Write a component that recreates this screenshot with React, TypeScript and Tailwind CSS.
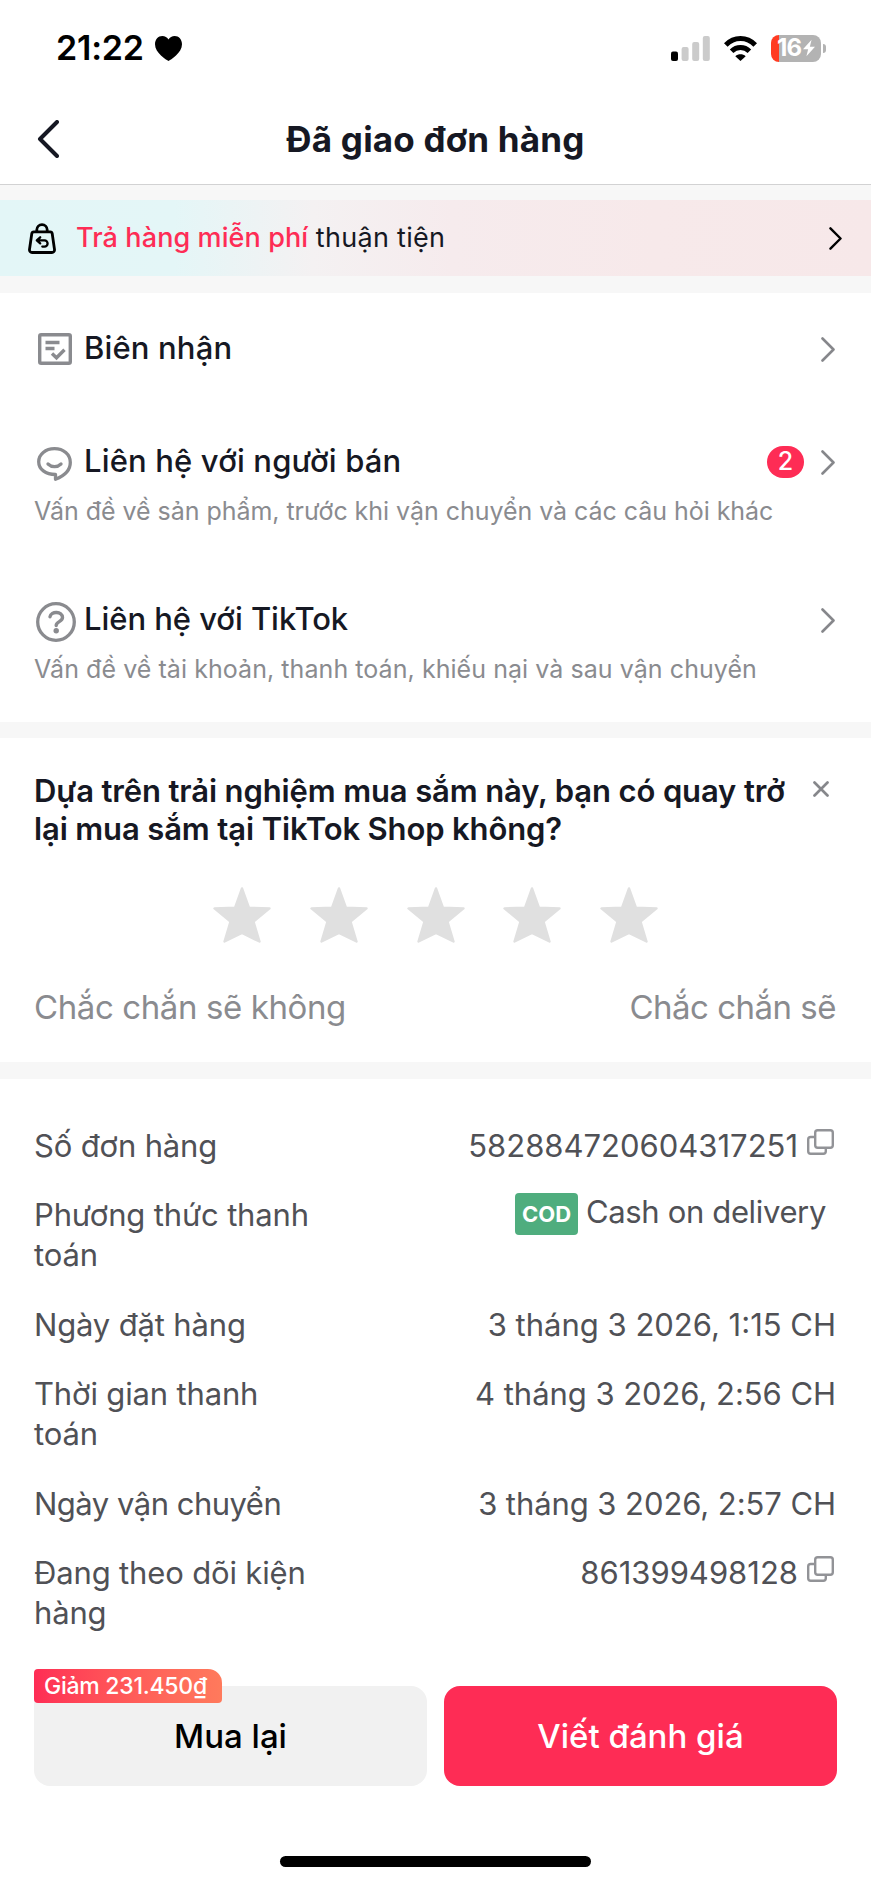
import React, { useState } from "react";

interface DetailRowProps {
  label: React.ReactNode;
  children: React.ReactNode;
}

interface MenuRowProps {
  icon: React.ReactNode;
  title: React.ReactNode;
  badge?: number;
  description?: React.ReactNode;
}

const ChevronIcon = ({ className }: { className: string }) => (
  <svg className={className} viewBox="0 0 14 25" fill="none" stroke="currentColor" strokeLinecap="round" strokeLinejoin="round">
    <path d="M1.5 1.5 12.5 12.5 1.5 23.5" strokeWidth="2.6" />
  </svg>
);

const CopyIcon = () => (
  <svg className="ml-[9px] mr-0.5 h-[26px] w-[27px] -translate-y-1" viewBox="0 0 27 26" fill="none" stroke="#929397" strokeWidth="2.4">
    <rect x="8.2" y="1.2" width="17.6" height="17.6" rx="2.5" />
    <path d="M8 8H3.700A2.500 2.500 0 0 0 1.200 10.500v11.800A2.500 2.500 0 0 0 3.700 24.800h12.600a2.500 2.500 0 0 0 2.500-2.500V19" />
  </svg>
);

const StarIcon = ({ filled }: { filled: boolean }) => (
  <svg className={filled ? "h-[56px] w-[58px] text-[#fe2c55]" : "h-[56px] w-[58px] text-[#e0e0e0]"} viewBox="0 0 58 56" fill="currentColor">
    <path
      d="M29 1.5 36 20.8 56.5 21.4 40.500 34.500 46.500 54.500 29 46 11.500 54.500 17.500 34.500 1.500 21.400 22 20.800Z"
      stroke="currentColor"
      strokeWidth="2.4"
      strokeLinejoin="round"
    />
  </svg>
);

function StatusBar() {
  return (
    <div className="flex h-24 items-center pl-[56px] pr-[45px] text-black">
      <span className="text-[34px] font-semibold leading-none tracking-[-0.2px]">21:22</span>
      <svg className="ml-[11px] h-[25px] w-[27px]" viewBox="0 0 27 25" fill="currentColor">
        <path d="M13.500 25C11.500 23.800 0 17 0 8.200 0 3.500 3.200 0 7.300 0c2.700 0 4.900 1.300 6.200 3.400C14.800 1.300 17 0 19.700 0 23.800 0 27 3.500 27 8.200 27 17 15.500 23.800 13.500 25Z" />
      </svg>
      <div className="ml-auto flex items-center">
        <svg className="h-[25px] w-[39px]" viewBox="0 0 39 25">
          <rect x="0" y="15.500" width="7" height="9.500" rx="2" fill="#000" />
          <rect x="10.600" y="11" width="7" height="14" rx="2" fill="#cbcbcb" />
          <rect x="21.200" y="6" width="7" height="19" rx="2" fill="#cbcbcb" />
          <rect x="31.800" y="0" width="7" height="25" rx="2" fill="#cbcbcb" />
        </svg>
        <svg className="ml-3.5 h-[25px] w-[33px]" viewBox="0 0 33 25" fill="none" stroke="#000" strokeWidth="5">
          <path d="M1.800 9C10 .4 23 .4 31.200 9" />
          <path d="M7.600 15.300c5-5 12.800-5 17.800 0" />
          <path d="M16.500 25 11.300 20.200c3-2.500 7.400-2.500 10.400 0Z" fill="#000" stroke="none" />
        </svg>
        <div className="ml-3.5 flex h-[27px] w-[50px] items-center justify-center rounded-lg bg-[linear-gradient(90deg,#ff3b22_8px,#b3b3b3_8px)] text-white">
          <span className="text-[24px] font-bold leading-none tracking-[-1px]">16</span>
          <svg className="ml-0.5 h-[18px] w-[12px]" viewBox="0 0 14 19" fill="currentColor">
            <path d="M10 0 0 11h6L4 19 14 8H8Z" />
          </svg>
        </div>
        <div className="ml-0.5 h-[9px] w-[3px] rounded-r-full bg-[#b3b3b3]" />
      </div>
    </div>
  );
}

function MenuRow({ icon, title, badge, description }: MenuRowProps) {
  return (
    <div>
      <div className="flex h-10 items-center">
        <div className="flex w-[50px] shrink-0 items-center">{icon}</div>
        <h3 className="whitespace-nowrap text-[31px] font-medium leading-10 tracking-[0.15px] text-[#161823]">{title}</h3>
        <div className="ml-auto flex items-center pr-0.5 pt-0.5">
          {badge && (
            <span className="mr-[17px] flex h-8 w-[37px] items-center justify-center rounded-full bg-[#fe2c55] pb-0.5 text-[25px] font-medium leading-none text-white">
              {badge}
            </span>
          )}
          <ChevronIcon className="h-[25px] w-[14px] text-[#86878b]" />
        </div>
      </div>
      {description && <p className="mt-3 whitespace-nowrap text-[25px] leading-9 text-[#8a8b8f]">{description}</p>}
    </div>
  );
}

function DetailRow({ label, children }: DetailRowProps) {
  return (
    <div className="flex items-start justify-between">
      <span className="w-[285px] tracking-[-0.15px]">{label}</span>
      <span className="flex items-center whitespace-nowrap">{children}</span>
    </div>
  );
}

export default function App() {
  const [rating, setRating] = useState(0);

  return (
    <div className="flex h-[1884px] w-[871px] flex-col overflow-hidden bg-white font-['Inter','Noto_Sans',sans-serif] text-[#161823]">
      <StatusBar />

      {/* Header */}
      <header className="flex h-[89px] items-center border-b border-[#d2d2d3] px-[37px] pb-0.5">
        <svg className="h-[38px] w-[22px]" viewBox="0 0 22 38" fill="none" stroke="currentColor" strokeWidth="4" strokeLinecap="round" strokeLinejoin="round">
          <path d="M20 2 3 19 20 36" />
        </svg>
        <h1 className="flex-1 whitespace-nowrap pr-[22px] text-center text-[35px] font-bold leading-none tracking-[0.2px]">Đã giao đơn hàng</h1>
      </header>

      {/* Free returns banner */}
      <div className="bg-[#f7f7f7] pb-[17px] pt-[15px]">
        <div className="flex h-[76px] items-center bg-[linear-gradient(90deg,#e3f6f7_0%,#e4f6f7_20%,#f4f1f2_36%,#f6ebed_52%,#f7e9ea_75%,#f7e8e9_100%)] pl-7 pr-[29px]">
          <svg className="h-[31px] w-[28px] text-black" viewBox="0 0 28 31" fill="none" stroke="currentColor" strokeWidth="2.8" strokeLinecap="round" strokeLinejoin="round">
            <path d="M5.800 8.800h16.400a2 2 0 0 1 2 1.700l2.300 16a2.600 2.600 0 0 1-2.600 3H4.100a2.600 2.600 0 0 1-2.600-3l2.300-16a2 2 0 0 1 2-1.700Z" />
            <path d="M8.800 8.500V6.800a5.200 5.200 0 0 1 10.400 0v1.700" />
            <path d="M12.200 14.300 8.800 17.400l3.400 3M9.200 17.400h7.300a3.100 3.100 0 0 1 0 6.200h-2.200" strokeWidth="2.3" />
          </svg>
          <p className="ml-5 whitespace-nowrap pb-0.5 text-[27px] leading-none">
            <span className="font-medium tracking-[0.1px] text-[#fe2c55]">Trả hàng miễn phí</span>{" "}
            <span className="tracking-[0.3px]">thuận tiện</span>
          </p>
          <ChevronIcon className="ml-auto h-[23px] w-[13px] text-black" />
        </div>
      </div>

      {/* Help menu */}
      <section className="px-[34px] pb-[35px] pt-[35px]">
        <MenuRow
          icon={
            <svg className="ml-1 mt-0.5 h-[32px] w-[34px]" viewBox="0 0 34 32" fill="none" stroke="#8a8b8f" strokeWidth="3.4">
              <rect x="1.700" y="1.700" width="30.600" height="28.600" rx="1.500" />
              <path d="M7.500 9.500h14M7.500 15.500h9M14 20.500l4.500 4.300 8-8" />
            </svg>
          }
          title="Biên nhận"
        />
        <div className="mt-[73px]">
          <MenuRow
            icon={
              <svg className="ml-[3px] mt-1.5 h-[34px] w-[35px]" viewBox="0 0 35 34" fill="none" stroke="#8a8b8f" strokeWidth="3.3" strokeLinecap="round">
                <path d="M18.500 27.500v4.800C27 29 33.300 23 33.300 15.500 33.300 7.500 26.500 1.700 17.500 1.700S1.700 7.300 1.700 14.700s6.800 12.800 16.800 12.800Z" strokeLinejoin="round" />
                <path d="M11 17c3.800 3.600 9.200 3.600 13 0" />
              </svg>
            }
            title="Liên hệ với người bán"
            badge={2}
            description={<span className="tracking-[-0.04px]">Vấn đề về sản phẩm, trước khi vận chuyển và các câu hỏi khác</span>}
          />
        </div>
        <div className="mt-[70px]">
          <MenuRow
            icon={
              <svg className="ml-0.5 mt-1.5 h-10 w-10" viewBox="0 0 40 40" fill="none" stroke="#8a8b8f" strokeWidth="3.3" strokeLinecap="round">
                <circle cx="20" cy="20" r="18.300" />
                <path d="M14 14.700c1-6 12.500-5.600 12.500.8 0 4.300-6.300 4-6.300 8" strokeWidth="3.4" />
                <circle cx="20.200" cy="28.700" r="2.700" fill="#8a8b8f" stroke="none" />
              </svg>
            }
            title={<span className="tracking-[-0.05px]">Liên hệ với TikTok</span>}
            description={<span className="tracking-[0.06px]">Vấn đề về tài khoản, thanh toán, khiếu nại và sau vận chuyển</span>}
          />
        </div>
      </section>

      <div className="h-4 shrink-0 bg-[#f7f7f7]" />

      {/* Survey */}
      <section className="pb-[33px] pl-[35px] pr-[35px] pt-[34px]">
        <div className="-ml-px flex items-start justify-between">
          <h2 className="whitespace-nowrap text-[31px] font-semibold leading-[38px] tracking-[-0.13px]">
            Dựa trên trải nghiệm mua sắm này, bạn có quay trở
            <br />
            lại mua sắm tại TikTok Shop không?
          </h2>
          <svg className="mr-[7px] mt-[9px] h-4 w-4 shrink-0" viewBox="0 0 16 16" stroke="#86878b" strokeWidth="2.7" strokeLinecap="round">
            <path d="M1.500 1.500l13 13M14.500 1.500l-13 13" />
          </svg>
        </div>
        <div className="mt-[39px] flex justify-center gap-[38.8px]">
          {[1, 2, 3, 4, 5].map((value) => (
            <button key={value} type="button" aria-label={`${value}`} onClick={() => setRating(value)}>
              <StarIcon filled={value <= rating} />
            </button>
          ))}
        </div>
        <div className="-ml-px mt-[42px] flex justify-between whitespace-nowrap text-[33px] leading-[44px] tracking-[-0.4px] text-[#8a8b8f]">
          <span>Chắc chắn sẽ không</span>
          <span className="tracking-[-0.5px]">Chắc chắn sẽ</span>
        </div>
      </section>

      <div className="h-[17px] shrink-0 bg-[#f7f7f7]" />

      {/* Order details */}
      <section className="flex flex-col gap-[29.4px] pl-[34px] pr-[35px] pt-[47px] text-[31px] leading-10 text-[#505156]">
        <DetailRow label="Số đơn hàng">
          <span>582884720604317251</span>
          <CopyIcon />
        </DetailRow>
        <DetailRow label="Phương thức thanh toán">
          <span className="-mt-px flex h-10 items-center pr-2.5">
            <span className="mr-2 flex h-[42px] w-[63px] items-center justify-center rounded bg-[#4fad7e] text-[22px] font-bold leading-none text-white">
              COD
            </span>
            <span className="-mt-1 tracking-[-0.35px]">Cash on delivery</span>
          </span>
        </DetailRow>
        <DetailRow label="Ngày đặt hàng">3 tháng 3 2026, 1:15 CH</DetailRow>
        <DetailRow label="Thời gian thanh toán">
          <span className="tracking-[-0.05px]">4 tháng 3 2026, 2:56 CH</span>
        </DetailRow>
        <DetailRow label={<span className="tracking-[-0.5px]">Ngày vận chuyển</span>}>
          <span className="tracking-[-0.07px]">3 tháng 3 2026, 2:57 CH</span>
        </DetailRow>
        <DetailRow label="Đang theo dõi kiện hàng">
          <span>861399498128</span>
          <CopyIcon />
        </DetailRow>
      </section>

      {/* Bottom actions */}
      <div className="mt-[53px] flex gap-[17px] px-[34px]">
        <button type="button" className="relative h-[100px] flex-1 rounded-2xl bg-[#f1f1f1] pt-0.5 text-[33px] font-medium text-black">
          <span className="absolute -top-[17px] left-0 flex h-[34px] w-[188px] items-center whitespace-nowrap rounded-[4px] rounded-tr-[14px] bg-linear-to-r from-[#fe2c55] to-[#ff7a5c] pl-2.5 pt-0.5 text-[23px] font-medium leading-none tracking-[-0.25px] text-white">
            Giảm 231.450₫
          </span>
          Mua lại
        </button>
        <button type="button" className="h-[100px] flex-1 rounded-2xl bg-[#fe2c55] pt-0.5 text-[33px] font-medium text-white">
          Viết đánh giá
        </button>
      </div>

      {/* Home indicator */}
      <div className="mx-auto mt-[70px] h-[11px] w-[311px] shrink-0 rounded-full bg-black" />
    </div>
  );
}
